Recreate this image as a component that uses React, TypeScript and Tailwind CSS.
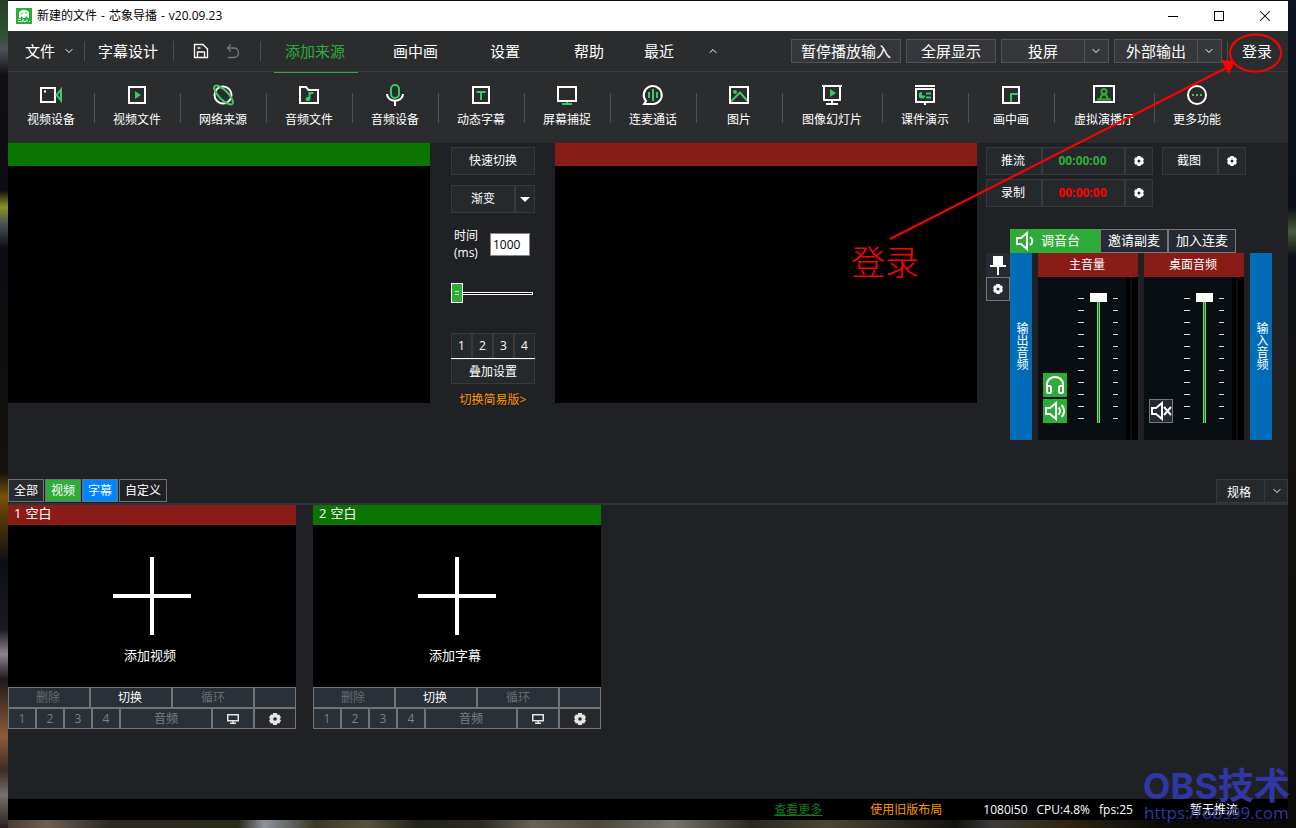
import { useState } from 'react';
import type { ReactNode } from 'react';
import clsx from 'clsx';
import { ChevronDown, ChevronUp, X } from 'lucide-react';

const GREEN = '#3cc768';

const TOOLS: { label: string; wide?: boolean; icon: ReactNode }[] = [
  {
    label: '视频设备',
    icon: (
      <>
        <rect x="1" y="4" width="14" height="14" />
        <path d="M4 7.5h2" />
        <path d="M21 5.5v11l-4.5-5.5z" stroke={GREEN} />
      </>
    ),
  },
  {
    label: '视频文件',
    icon: (
      <>
        <rect x="3" y="3" width="16" height="16" />
        <path d="M9 7l6 4-6 4z" fill={GREEN} stroke="none" />
      </>
    ),
  },
  {
    label: '网络来源',
    icon: (
      <>
        <circle cx="11" cy="11" r="8.5" />
        <ellipse cx="11.5" cy="11" rx="12.5" ry="4.5" transform="rotate(45 11.5 11)" stroke={GREEN} />
      </>
    ),
  },
  {
    label: '音频文件',
    icon: (
      <>
        <path d="M2 19V3h6l2.5 3H20v13z" />
        <path d="M11.5 15V9h4" stroke={GREEN} />
        <circle cx="10" cy="15" r="2.3" fill={GREEN} stroke="none" />
      </>
    ),
  },
  {
    label: '音频设备',
    icon: (
      <>
        <rect x="7" y="1" width="8" height="13" rx="4" stroke={GREEN} />
        <path d="M3 10c0 9 16 9 16 0M11 17v5" />
      </>
    ),
  },
  {
    label: '动态字幕',
    icon: (
      <>
        <rect x="3" y="3" width="16" height="16" />
        <path d="M6.5 8h9M11 8v8" stroke={GREEN} />
      </>
    ),
  },
  {
    label: '屏幕捕捉',
    icon: (
      <>
        <rect x="2" y="3" width="18" height="14" />
        <path d="M6 20h10M11 18v2" stroke={GREEN} />
      </>
    ),
  },
  {
    label: '连麦通话',
    icon: (
      <>
        <path d="M2 20h9a9 9 0 1 0-7-3z" />
        <path d="M7 8v6M11 5v12M15 8v6" stroke={GREEN} />
      </>
    ),
  },
  {
    label: '图片',
    icon: (
      <>
        <path d="M3 17.5l9-9 7 8" stroke={GREEN} />
        <circle cx="7" cy="8" r="2" fill={GREEN} stroke="none" />
        <rect x="2" y="3" width="18" height="16" />
      </>
    ),
  },
  {
    label: '图像幻灯片',
    wide: true,
    icon: (
      <>
        <path d="M1 2h20M3 2v14h16V2M11 16v4M5 20h12" />
        <path d="M9 5l6 4-6 4z" fill={GREEN} stroke="none" />
      </>
    ),
  },
  {
    label: '课件演示',
    icon: (
      <>
        <path d="M1 2h20M2 5h18v13H2zM11 18v3" />
        <path d="M12 9.5h5M12 13.5h5" stroke={GREEN} />
        <path d="M8 8a3.3 3.3 0 1 0 3.3 3.5H8z" fill={GREEN} stroke="none" />
      </>
    ),
  },
  {
    label: '画中画',
    icon: (
      <>
        <rect x="3" y="3" width="16" height="16" />
        <path d="M11 18v-8h7" stroke={GREEN} />
      </>
    ),
  },
  {
    label: '虚拟演播厅',
    wide: true,
    icon: (
      <>
        <rect x="1" y="2" width="20" height="16" />
        <g stroke="#2eac39">
          <circle cx="11" cy="7.5" r="2.6" />
          <path d="M4 15.5h14M7 15c1-3 2-4.5 4-4.5s3 1.5 4 4.5" />
        </g>
      </>
    ),
  },
  {
    label: '更多功能',
    icon: (
      <>
        <circle cx="11" cy="11" r="9" />
        <path d="M6 11h2M10 11h2M14 11h2" stroke={GREEN} />
      </>
    ),
  },
];

const MENU = [
  { label: '画中画', gap: 'ml-[35px]' },
  { label: '设置', gap: 'ml-[52px]' },
  { label: '帮助', gap: 'ml-[54px]' },
  { label: '最近', gap: 'ml-10' },
];

const FILTERS = [
  { label: '全部', style: 'bg-[#262b2f]' },
  { label: '视频', style: 'bg-[#2eac39]' },
  { label: '字幕', style: 'bg-[#0084ff]' },
  { label: '自定义', style: 'bg-[#202124]' },
];

const TICKS = Array.from({ length: 11 }, (_, i) => i);

const panelBtn = 'flex items-center justify-center border border-[#363a3d] bg-[#25292c]';
const topBtn = 'flex h-6 items-center justify-center border border-[#505255] bg-[#36373a] text-[15px]';
const slotBtn = 'flex items-center justify-center border border-[#747474] bg-[#293037]';

const Gear = ({ size = 10 }: { size?: number }) => (
  <svg width={size} height={size} viewBox="0 0 20 20" fill="currentColor" aria-hidden="true">
    <path
      fillRule="evenodd"
      d="M7 0h6l1 3 3-.5 3 5L18 10l2 2.500-3 5-3-.5-1 3H7l-1-3-3 .5-3-5L2 10 0 7.500l3-5 3 .5zM10 7a3 3 0 1 0 0 6 3 3 0 0 0 0-6z"
    />
  </svg>
);

const Speaker = ({ mode }: { mode: 'low' | 'high' | 'mute' }) => (
  <svg width="22" height="20" viewBox="0 0 22 20" fill="none" stroke="currentColor" strokeWidth="2" aria-hidden="true">
    <path d="M2 7h4l6-5v16l-6-5H2z" />
    {mode === 'low' && <path d="M15 6c3 2 3 6 0 8" />}
    {mode === 'high' && <path d="M14.5 6.5c2 2 2 5 0 7M17.5 4c3.5 3.5 3.5 8.5 0 12" />}
    {mode === 'mute' && <path d="M14 6l7 8M21 6l-7 8" />}
  </svg>
);

const Divider = () => <span className="h-5 w-px bg-[#4c4d50]" />;

const TitleBar = () => (
  <header className="flex h-[30px] items-center bg-white pl-2 text-xs text-black">
    <svg width="16" height="16" viewBox="0 0 16 16" aria-hidden="true">
      <rect width="16" height="16" fill="#2eac39" />
      <path d="M3 10V6c0-3 2-4 5-4s5 1 5 4v4h-1.5V8.5h-2V10h-3V8.5H5V10z" fill="#fff" />
      <path d="M6 4.5v2M10 4v2" stroke="#2eac39" />
      <path d="M2 11.5h3M2 13.5h4M7 11v3M8 13.5h2M11 11.5v2M13 13.5h1" stroke="#fff" />
    </svg>
    <h1 className="ml-[5px] flex gap-1">
      <span>新建的文件</span>
      <span>-</span>
      <span>芯象导播</span>
      <span>-</span>
      <span>v20.09.23</span>
    </h1>
    <div className="ml-auto flex h-full">
      <button aria-label="最小化" className="flex w-[46px] items-center justify-center">
        <span className="h-px w-[10px] bg-black" />
      </button>
      <button aria-label="最大化" className="flex w-[46px] items-center justify-center">
        <span className="size-[10px] border border-black" />
      </button>
      <button aria-label="关闭" className="flex w-[46px] items-center justify-center">
        <X size={18} strokeWidth={1.4} />
      </button>
    </div>
  </header>
);

const MenuBar = () => (
  <nav className="flex h-10 items-center whitespace-nowrap bg-[#2b2c2e] pl-[17px] text-[15px]">
    <button className="flex items-center gap-2">
      文件
      <ChevronDown size={12} strokeWidth={2} />
    </button>
    <span className="w-[9px]" />
    <Divider />
    <button className="ml-[13px] mr-[15px]">字幕设计</button>
    <Divider />
    <button aria-label="保存" className="ml-[19px]">
      <svg width="16" height="16" viewBox="0 0 16 16" fill="none" stroke="#fff" strokeWidth="1.3" aria-hidden="true">
        <path d="M1.5 1.5H10l4.500 4.500v8.500h-13zM4.500 14.500V9h7v5.500M4.500 5h3" />
      </svg>
    </button>
    <button aria-label="撤销" className="ml-4 mr-[19px]">
      <svg width="16" height="16" viewBox="0 0 16 16" fill="none" stroke="#77797c" strokeWidth="1.3" aria-hidden="true">
        <path d="M6 1.5L2.500 5 6 8.500M2.500 5H9c6 0 6 9.500 0 9.500H3" />
      </svg>
    </button>
    <Divider />
    <button className="ml-[13px] h-full w-[84px] pr-[2px] text-[#2eac39]">添加来源</button>
    {MENU.map((item) => (
      <button key={item.label} className={item.gap}>
        {item.label}
      </button>
    ))}
    <button aria-label="收起" className="ml-[33px]">
      <ChevronUp size={12} strokeWidth={2} />
    </button>

    <div className="ml-auto flex items-center gap-[5px]">
      <button className={clsx(topBtn, 'w-[110px]')}>暂停播放输入</button>
      <button className={clsx(topBtn, 'w-[90px]')}>全屏显示</button>
      <div className="flex">
        <button className={clsx(topBtn, 'w-[84px]')}>投屏</button>
        <button aria-label="投屏选项" className={clsx(topBtn, 'w-6 border-l-0')}>
          <ChevronDown size={12} />
        </button>
      </div>
      <div className="flex">
        <button className={clsx(topBtn, 'w-[84px]')}>外部输出</button>
        <button aria-label="外部输出选项" className={clsx(topBtn, 'w-6 border-l-0')}>
          <ChevronDown size={12} />
        </button>
      </div>
      <Divider />
      <button className="ml-[9px] mr-4">登录</button>
    </div>
  </nav>
);

const ToolBar = () => (
  <div className="flex h-[72px] flex-col bg-[#2b2c2e] text-xs">
    <div className="h-px bg-[#3a3b3e]" />
    <div className="ml-[266px] h-px w-[84px] bg-[#2eac39]" />
    <div className="flex flex-1 items-center pl-px">
      {TOOLS.map((tool, i) => (
        <div key={tool.label} className="flex items-center">
          <button
            className={clsx('flex flex-col items-center gap-[5px] pb-[3px] pr-px', tool.wide ? 'w-[99px]' : 'w-[85px]')}
          >
            <svg
              width="22"
              height="22"
              viewBox="0 0 22 22"
              fill="none"
              stroke="#fff"
              strokeWidth="2"
              className="overflow-visible"
              aria-hidden="true"
            >
              {tool.icon}
            </svg>
            <span className="leading-[18px]">{tool.label}</span>
          </button>
          {i < TOOLS.length - 1 && <span className="h-[30px] w-px bg-[#505154]" />}
        </div>
      ))}
    </div>
  </div>
);

const Monitor = ({ color }: { color: string }) => (
  <section className="min-w-0 flex-1">
    <div className={clsx('h-[23px]', color)} />
    <div className="aspect-video bg-black" />
  </section>
);

const SwitchPanel = () => {
  const [time, setTime] = useState('1000');
  const [fader, setFader] = useState(0);

  return (
    <section className="ml-[21px] mr-5 flex w-[84px] flex-col pt-1 text-xs">
      <button className={clsx(panelBtn, 'h-7')}>快速切换</button>
      <div className="relative mt-[10px]">
        <select
          aria-label="转场效果"
          className="block h-7 w-full appearance-none border border-[#363a3d] bg-[#25292c] pr-5 text-center [text-align-last:center]"
        >
          <option>渐变</option>
        </select>
        <span className="pointer-events-none absolute inset-y-0 right-0 flex w-[21px] items-center justify-center border-x-2 border-r-transparent border-l-[#363a3d]">
          <svg width="10" height="5" viewBox="0 0 10 5" fill="#fff" aria-hidden="true">
            <path d="M0 0h10L5 5z" />
          </svg>
        </span>
      </div>
      <div className="mt-[14px] flex items-center gap-2 pl-[3px]">
        <label htmlFor="fade-time" className="w-7 leading-[17px]">
          时间
          <br />
          (ms)
        </label>
        <input
          id="fade-time"
          value={time}
          onChange={(e) => setTime(e.target.value)}
          className="h-[23px] w-10 border border-[#888] bg-white pl-[2px] text-xs text-black"
        />
      </div>
      <input
        type="range"
        aria-label="手动转场"
        min={0}
        max={100}
        value={fader}
        onChange={(e) => setFader(Number(e.target.value))}
        className="mt-[22px] h-5 w-[82px] appearance-none bg-transparent [&::-webkit-slider-runnable-track]:h-[3px] [&::-webkit-slider-runnable-track]:border [&::-webkit-slider-runnable-track]:border-white [&::-webkit-slider-runnable-track]:bg-black [&::-webkit-slider-thumb]:-ml-px [&::-webkit-slider-thumb]:-mt-[10px] [&::-webkit-slider-thumb]:h-5 [&::-webkit-slider-thumb]:w-3 [&::-webkit-slider-thumb]:appearance-none [&::-webkit-slider-thumb]:border [&::-webkit-slider-thumb]:border-white [&::-webkit-slider-thumb]:bg-[#2eac39] [&::-webkit-slider-thumb]:bg-[linear-gradient(#c9eccc_1px,transparent_1px_3px,#c9eccc_3px)] [&::-webkit-slider-thumb]:bg-[length:4px_4px] [&::-webkit-slider-thumb]:bg-center [&::-webkit-slider-thumb]:bg-no-repeat"
      />
      <div className="mt-[30px] grid grid-cols-4">
        {[1, 2, 3, 4].map((n) => (
          <button key={n} className={clsx(panelBtn, 'h-[25px] border-b-0')}>
            {n}
          </button>
        ))}
      </div>
      <div className="h-px bg-white" />
      <button className={clsx(panelBtn, 'h-[25px]')}>叠加设置</button>
      <a href="#simple" className="mt-[7px] text-center leading-[18px] text-[#ff9500]">
        切换简易版&gt;
      </a>
    </section>
  );
};

const Recorder = ({ label, color }: { label: string; color: string }) => (
  <div className="flex h-7">
    <button className={clsx(panelBtn, 'w-14 pr-[2px]')}>{label}</button>
    <time className={clsx(panelBtn, 'w-[83px] pr-[2px] font-bold', color)}>00:00:00</time>
    <button aria-label={`${label}设置`} className={clsx(panelBtn, 'w-7')}>
      <Gear />
    </button>
  </div>
);

const Channel = ({ name, children }: { name: string; children: ReactNode }) => {
  const [volume, setVolume] = useState(100);

  return (
    <div className="flex w-[100px] flex-col">
      <div className="flex h-6 items-center justify-center bg-[#8a1c18] pr-[2px] text-xs">{name}</div>
      <div className="flex flex-1 bg-[#080e12]">
        <div className="flex w-10 flex-col justify-end gap-[2px] pb-[17px] pl-[5px]">{children}</div>
        <div className="flex pt-4">
          <div className="mt-[5px] flex flex-col gap-[11px]">
            {TICKS.map((t) => (
              <span key={t} className="h-px w-[6px] bg-[#ddd]" />
            ))}
          </div>
          <input
            type="range"
            aria-label={name}
            value={volume}
            onChange={(e) => setVolume(Number(e.target.value))}
            className="ml-[6px] mr-[6px] h-[130px] w-[17px] appearance-none bg-[linear-gradient(90deg,#6fdc7c_1px,#0a8a20_1px_2px,#6fdc7c_2px)] bg-[length:3px_100%] bg-center bg-no-repeat [direction:rtl] [writing-mode:vertical-lr] [&::-webkit-slider-thumb]:h-[9px] [&::-webkit-slider-thumb]:w-[17px] [&::-webkit-slider-thumb]:appearance-none [&::-webkit-slider-thumb]:bg-white"
          />
          <div className="mt-[5px] flex flex-col gap-[11px]">
            {TICKS.map((t) => (
              <span key={t} className="h-px w-[5px] bg-[#ddd]" />
            ))}
          </div>
        </div>
        <div className="ml-auto flex gap-[2px]">
          <span className="w-1 bg-black" />
          <span className="w-[6px] bg-black" />
        </div>
      </div>
    </div>
  );
};

const Strip = ({ label }: { label: string }) => (
  <div className="flex w-[22px] items-center justify-center bg-[#006cb8] pb-[2px] text-xs">
    <span className="[writing-mode:vertical-rl]">{label}</span>
  </div>
);

const OutputPanel = () => (
  <section className="ml-[9px] w-[302px] shrink-0 pt-1 text-xs">
    <div className="flex gap-[9px]">
      <div className="flex flex-col gap-1">
        <Recorder label="推流" color="text-[#2eac39]" />
        <Recorder label="录制" color="text-[#ff0000]" />
      </div>
      <div className="flex h-7">
        <button className={clsx(panelBtn, 'w-14 pr-[2px]')}>截图</button>
        <button aria-label="截图设置" className={clsx(panelBtn, 'w-7')}>
          <Gear />
        </button>
      </div>
    </div>

    <div className="mt-[22px] flex h-6 pl-6 text-[13px]">
      <button className="flex w-[90px] items-center gap-1 bg-[#2eac39] pl-[5px]">
        <Speaker mode="low" />
        调音台
      </button>
      <button className="w-[68px] border border-[#777] bg-[#262b33]">邀请副麦</button>
      <button className="w-[68px] border border-[#777] bg-[#262b33]">加入连麦</button>
    </div>
    <div className="flex h-[187px]">
      <div className="flex w-6 flex-col">
        <button aria-label="固定" className="flex h-6 items-center justify-center bg-[#262b33]">
          <svg width="16" height="20" viewBox="0 0 16 20" fill="#fff" aria-hidden="true">
            <path d="M3 1h10v9h3v2H9v8H7v-8H0v-2h3z" />
          </svg>
        </button>
        <button
          aria-label="调音台设置"
          className="flex h-6 items-center justify-center border border-[#777] bg-[#262b33]"
        >
          <Gear />
        </button>
      </div>
      <div className="flex gap-[6px]">
        <Strip label="输出音频" />
        <Channel name="主音量">
          <button aria-label="监听" className="flex size-6 items-center justify-center bg-[#2eac39]">
            <svg width="20" height="20" viewBox="0 0 20 20" fill="none" stroke="#fff" strokeWidth="2" aria-hidden="true">
              <path d="M2 14V9.5C2-.5 18-.5 18 9.500V14" />
              <rect x="2" y="11" width="4" height="7" rx="1.5" />
              <rect x="14" y="11" width="4" height="7" rx="1.5" />
            </svg>
          </button>
          <button aria-label="静音" className="flex size-6 items-center justify-center bg-[#2eac39]">
            <Speaker mode="high" />
          </button>
        </Channel>
        <Channel name="桌面音频">
          <button
            aria-label="取消静音"
            className="flex size-6 items-center justify-center border border-[#777] bg-[#262b33]"
          >
            <Speaker mode="mute" />
          </button>
        </Channel>
        <Strip label="输入音频" />
      </div>
    </div>
  </section>
);

const SourceCard = ({ index, action, color }: { index: number; action: string; color: string }) => (
  <article className="w-72">
    <h2 className={clsx('flex h-5 items-center gap-1 pb-[2px] pl-[6px] text-[13px]', color)}>
      <span>{index}</span>
      <span>空白</span>
    </h2>
    <button className="flex h-[162px] w-full flex-col items-center bg-black pt-8 text-[13px]">
      <svg width="78" height="78" viewBox="0 0 78 78" stroke="#fff" strokeWidth="4" aria-hidden="true">
        <path d="M39 0v78M0 39h78" />
      </svg>
      <span className="mt-[11px] pr-1 leading-[18px]">{action}</span>
    </button>
    <div className="flex h-[21px] text-xs">
      <button className={clsx(slotBtn, 'w-[82px] pr-[2px] text-[#686d72]')}>删除</button>
      <button className={clsx(slotBtn, 'w-[82px] pr-[2px] text-white')}>切换</button>
      <button className={clsx(slotBtn, 'w-[82px] text-[#686d72]')}>循环</button>
      <span className={clsx(slotBtn, 'w-[42px]')} />
    </div>
    <div className="flex h-[21px] text-xs text-[#7b7f83]">
      {[1, 2, 3, 4].map((n) => (
        <button key={n} className={clsx(slotBtn, 'w-7')}>
          {n}
        </button>
      ))}
      <button className={clsx(slotBtn, 'w-[92px]')}>音频</button>
      <button aria-label="输出到屏幕" className={clsx(slotBtn, 'w-[42px]')}>
        <svg width="12" height="10" viewBox="0 0 12 10" fill="none" stroke="#e4e4e4" strokeWidth="1.5" aria-hidden="true">
          <path d="M.75.75h10.500v6H.75zM6 7v2M3 9.300h6" />
        </svg>
      </button>
      <button
        aria-label="设置"
        className="flex w-[42px] items-center justify-center border border-[#747474] bg-[#27292c] text-[#e4e4e4]"
      >
        <Gear size={12} />
      </button>
    </div>
  </article>
);

const Sources = () => (
  <section className="flex-1">
    <div className="flex h-[26px] border-b-2 border-[#2c333a] text-xs">
      <div className="flex h-[23px] gap-px">
        {FILTERS.map((f) => (
          <button key={f.label} className={clsx('border border-[#6f7173] px-[5px]', f.style)}>
            {f.label}
          </button>
        ))}
      </div>
      <div className="relative ml-auto w-[72px]">
        <select
          aria-label="规格"
          className="block h-6 w-full appearance-none border border-[#363a3d] bg-[#25292c] pl-[10px] pt-[3px]"
        >
          <option>规格</option>
        </select>
        <span className="pointer-events-none absolute inset-y-0 right-0 flex w-6 items-center justify-center border-l border-[#363a3d]">
          <ChevronDown size={12} />
        </span>
      </div>
    </div>
    <div className="flex gap-[17px]">
      <SourceCard index={1} action="添加视频" color="bg-[#8a1c18]" />
      <SourceCard index={2} action="添加字幕" color="bg-[#0a7500]" />
    </div>
  </section>
);

const StatusBar = () => (
  <footer className="flex h-[21px] items-center justify-end bg-black text-xs">
    <a href="#more" className="mr-12 text-[#0f7d14] underline">
      查看更多
    </a>
    <a href="#old" className="mr-[41px] text-[#ff9500]">
      使用旧版布局
    </a>
    <div className="mr-[57px] flex gap-[9px]">
      <span>1080i50</span>
      <span>CPU:4.8%</span>
      <span>fps:25</span>
    </div>
    <span className="mr-[50px]">暂无推流</span>
  </footer>
);

const LoginHint = () => (
  <div className="pointer-events-none absolute right-0 top-0 text-[#ff0000]">
    <svg width="446" height="290" viewBox="850 0 446 290" fill="none" stroke="#ff0000" strokeWidth="2" aria-hidden="true">
      <ellipse cx="1255.5" cy="53" rx="25.5" ry="18.5" />
      <path d="M890 239L1226 68" />
      <path d="M1221 60l14 1-6 13z" fill="#ff0000" stroke="none" />
    </svg>
    <p className="absolute bottom-1 left-px font-['Liberation_Serif','Noto_Sans_CJK_SC',serif] text-[34px] font-light leading-[44px]">
      登录
    </p>
  </div>
);

const Watermark = () => (
  <div className="pointer-events-none absolute bottom-[6px] right-[6px] text-center text-[#3136a6]">
    <p className="font-['Inter','Noto_Sans_CJK_SC',sans-serif] text-[36px] font-bold leading-[36px]">OBS技术</p>
    <p className="text-[17px] leading-[18px]">https://obs99.com</p>
  </div>
);

export default function App() {
  return (
    <div className="relative flex min-h-screen overflow-hidden bg-[#0c0c12] font-['Open_Sans','Noto_Sans_CJK_SC',sans-serif] text-white">
      <div className="w-2 shrink-0 bg-[linear-gradient(#23402b,#30502f_4%,#4c5258_6%,#101014_9%,#0c0c12_23%,#8a9420_25%,#4a5258_27%,#0c0c12_30%,#14110e_57%,#7a5206_60%,#5a3c06_62%,#0b0e18_68%,#1a1a24_76%,#8c8490_79%,#20181a_82%,#8a5c3c_89%,#3c2c24_93%,#77706c_96%,#2a2020)]" />
      <div className="flex min-w-0 flex-1 flex-col pt-px">
        <TitleBar />
        <MenuBar />
        <ToolBar />
        <main className="flex flex-1 flex-col bg-[#202124]">
          <div className="flex pb-[39px]">
            <Monitor color="bg-[#0a7500]" />
            <SwitchPanel />
            <Monitor color="bg-[#8a1c18]" />
            <OutputPanel />
          </div>
          <Sources />
        </main>
        <StatusBar />
        <div className="h-2 bg-[linear-gradient(90deg,#4a3c36,#6b5f55_3%,#2c2822_8%,#2a2a1c_18%,#8d93a0_20%,#3b3628_24%,#5a5040_28%,#23221a_32%,#2c2a22_37%,#6a6258_41%,#4c463c_46%,#77736a_52%,#2a2620_58%,#4c4436_64%,#14120f_74%,#3c3a38_77%,#2e2410_83%,#0b0b0c_90%)]" />
      </div>
      <div className="w-2 shrink-0 bg-[linear-gradient(#0c1420,#0a0f18_25%,#4a5a40_28%,#0c1018_31%,#14120e_50%,#0b0b0c)]" />
      <LoginHint />
      <Watermark />
    </div>
  );
}
